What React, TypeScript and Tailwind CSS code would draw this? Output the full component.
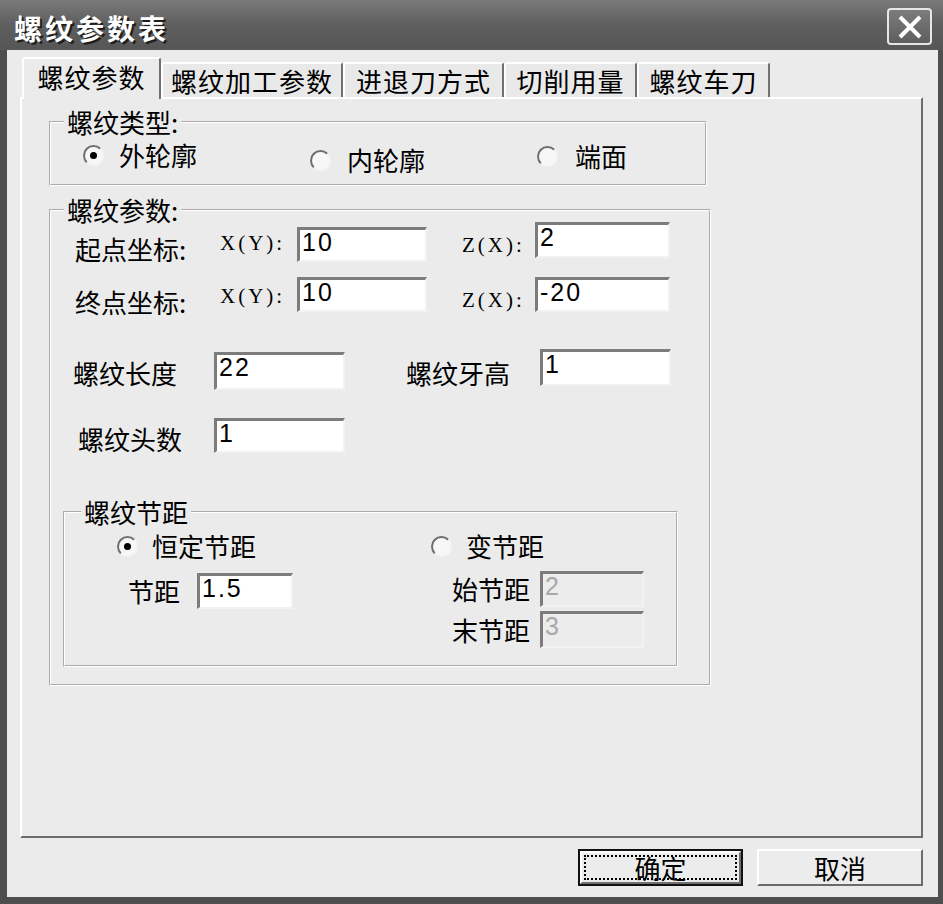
import React from 'react';

const CJK = "font-['Noto_Sans_CJK_SC','Noto_Sans_CJK_JP',sans-serif]";

function Radio({ checked }: { checked?: boolean }) {
  return (
    <span className="flex h-[21px] w-[21px] shrink-0 items-center justify-center rounded-full border-2 border-t-[#6f6f6f] border-l-[#6f6f6f] border-r-[#f4f4f4] border-b-[#f4f4f4] bg-[#f7f7f7]">
      {checked && <span className="h-[7px] w-[7px] rounded-full bg-black" />}
    </span>
  );
}

function Field({ value, className, disabled }: { value: string; className: string; disabled?: boolean }) {
  return (
    <div
      className={`shrink-0 border-t-[3px] border-l-[3px] border-r-2 border-b-2 border-t-[#7c7c7c] border-l-[#7c7c7c] border-r-[#f2f2f2] border-b-[#f2f2f2] pl-[2px] font-['Liberation_Sans',sans-serif] text-[25px] leading-[24px] tracking-[2px] ${
        disabled ? 'bg-[#ececec] text-[#a8a8a8]' : 'bg-white text-black'
      } ${className}`}
    >
      {value}
    </div>
  );
}

function Axis({ text, className }: { text: string; className: string }) {
  return (
    <span className={`shrink-0 font-['Liberation_Serif',serif] text-[21px] leading-[24px] tracking-[3px] ${className}`}>
      {text}
    </span>
  );
}

function Legend({ text, className }: { text: string; className: string }) {
  return <legend className={`px-[3px] text-[26px] leading-[24px] ${className}`}>{text}</legend>;
}

const TABS = [
  { label: '螺纹加工参数', w: 'w-[182px]' },
  { label: '进退刀方式', w: 'w-[161px]' },
  { label: '切削用量', w: 'w-[133px]' },
  { label: '螺纹车刀', w: 'w-[133px]' },
];

export default function App() {
  return (
    <div className={`flex h-[904px] w-[943px] flex-col overflow-hidden bg-[#4e4e4e] text-black ${CJK}`}>
      {/* title bar */}
      <div className="flex h-[50px] shrink-0 items-start justify-between bg-linear-to-b from-[#7a7a7a] via-[#5e5e5e] to-[#565656] pl-[14px] pr-[11px]">
        <span className="mt-[8px] text-[28px] leading-[40px] font-bold tracking-[3px] text-white [text-shadow:2px_2px_0_#1e1e1e]">
          螺纹参数表
        </span>
        <div className="mt-[8px] flex h-[37px] w-[45px] items-center justify-center rounded-[4px] border-2 border-[#e6e6e6] bg-linear-to-b from-[#7c7c7c] to-[#5e5e5e]">
          <svg width="26" height="24" viewBox="0 0 26 24">
            <path d="M3 2 L23 22 M23 2 L3 22" stroke="white" strokeWidth="4" />
          </svg>
        </div>
      </div>

      {/* body */}
      <div className="mb-[7px] ml-[7px] mr-[5px] flex flex-1 flex-col bg-[#ebebeb] pt-[7px]">
        {/* tabs */}
        <div className="ml-[15px] flex h-[40px] items-end">
          <div className="relative z-10 -mb-[2px] flex h-[42px] w-[139px] items-center justify-center rounded-t-[3px] border-l-2 border-t-2 border-r-2 border-l-white border-t-white border-r-[#707070] bg-[#ebebeb] pb-[4px] text-[26px] leading-[30px] tracking-[1px]">
            螺纹参数
          </div>
          {TABS.map((t) => (
            <div
              key={t.label}
              className={`flex h-[35px] ${t.w} items-center justify-center rounded-t-[3px] border-l-2 border-t-2 border-r-2 border-l-white border-t-white border-r-[#707070] bg-[#e9e9e9] text-[26px] leading-[30px] tracking-[1px]`}
            >
              {t.label}
            </div>
          ))}
        </div>

        {/* tab panel */}
        <div className="ml-[13px] h-[741px] w-[903px] border-2 border-t-white border-l-white border-r-[#6c6c6c] border-b-[#6c6c6c] pl-[27px] pt-[11px]">
          {/* 螺纹类型 */}
          <fieldset className="h-[76px] w-[658px] border-2 border-white [border-style:groove]">
            <Legend text="螺纹类型:" className="ml-[13px]" />
            <div className="flex items-start">
              <div className="ml-[32px] mt-[6px] flex h-[30px] w-[227px] items-center gap-[15px]">
                <Radio checked />
                <span className="text-[26px] leading-[30px]">外轮廓</span>
              </div>
              <div className="mt-[11px] flex h-[30px] w-[227px] items-center gap-[16px]">
                <Radio />
                <span className="text-[26px] leading-[30px]">内轮廓</span>
              </div>
              <div className="mt-[7px] flex h-[30px] items-center gap-[17px]">
                <Radio />
                <span className="text-[26px] leading-[30px]">端面</span>
              </div>
            </div>
          </fieldset>

          {/* 螺纹参数 */}
          <fieldset className="mt-[12px] h-[488px] w-[662px] border-2 border-white [border-style:groove]">
            <Legend text="螺纹参数:" className="ml-[13px]" />

            <div className="flex h-[40px] items-start">
              <span className="ml-[24px] mt-[12px] w-[145px] shrink-0 text-[26px] leading-[30px]">起点坐标:</span>
              <Axis text="X(Y):" className="mt-[9px] w-[77px]" />
              <Field value="10" className="mt-[5px] h-[35px] w-[130px]" />
              <Axis text="Z(X):" className="ml-[35px] mt-[11px] w-[73px]" />
              <Field value="2" className="h-[36px] w-[135px]" />
            </div>

            <div className="mt-[15px] flex h-[35px] items-start">
              <span className="ml-[24px] mt-[10px] w-[145px] shrink-0 text-[26px] leading-[30px]">终点坐标:</span>
              <Axis text="X(Y):" className="mt-[7px] w-[77px]" />
              <Field value="10" className="h-[35px] w-[130px]" />
              <Axis text="Z(X):" className="ml-[35px] mt-[11px] w-[73px]" />
              <Field value="-20" className="h-[35px] w-[135px]" />
            </div>

            <div className="mt-[37px] flex h-[41px] items-start">
              <span className="ml-[22px] mt-[9px] w-[141px] shrink-0 text-[26px] leading-[30px]">螺纹长度</span>
              <Field value="22" className="mt-[3px] h-[38px] w-[131px]" />
              <span className="ml-[61px] mt-[9px] w-[134px] shrink-0 text-[26px] leading-[30px]">螺纹牙高</span>
              <Field value="1" className="h-[37px] w-[131px]" />
            </div>

            <div className="mt-[28px] flex h-[35px] items-start">
              <span className="ml-[27px] mt-[6px] w-[136px] shrink-0 text-[26px] leading-[30px]">螺纹头数</span>
              <Field value="1" className="h-[35px] w-[131px]" />
            </div>

            {/* 螺纹节距 */}
            <fieldset className="ml-[12px] mt-[47px] h-[167px] w-[615px] border-2 border-white [border-style:groove]">
              <Legend text="螺纹节距" className="ml-[16px]" />
              <div className="mt-[7px] flex h-[30px] items-center">
                <div className="ml-[52px] flex w-[314px] items-center gap-[14px]">
                  <Radio checked />
                  <span className="text-[26px] leading-[30px]">恒定节距</span>
                </div>
                <div className="flex items-center gap-[14px]">
                  <Radio />
                  <span className="text-[26px] leading-[30px]">变节距</span>
                </div>
              </div>
              <div className="mt-[10px] flex items-start">
                <div className="mt-[2px] flex h-[36px] w-[387px] items-center">
                  <span className="ml-[63px] w-[69px] shrink-0 text-[26px] leading-[30px]">节距</span>
                  <Field value="1.5" className="h-[36px] w-[96px]" />
                </div>
                <div className="flex flex-col gap-[4px]">
                  <div className="flex h-[36px] items-center">
                    <span className="w-[88px] shrink-0 text-[26px] leading-[30px]">始节距</span>
                    <Field value="2" disabled className="h-[36px] w-[104px]" />
                  </div>
                  <div className="flex h-[37px] items-center">
                    <span className="w-[88px] shrink-0 text-[26px] leading-[30px]">末节距</span>
                    <Field value="3" disabled className="h-[37px] w-[104px]" />
                  </div>
                </div>
              </div>
            </fieldset>
          </fieldset>
        </div>

        {/* buttons */}
        <div className="ml-[13px] mt-[11px] flex w-[903px] justify-end gap-[14px]">
          <div className="flex h-[37px] w-[165px] border-2 border-[#111]">
            <div className="flex flex-1 border-2 border-t-white border-l-white border-r-[#707070] border-b-[#707070] bg-[#ececec] p-[2px]">
              <div className="flex flex-1 items-center justify-center border-2 border-dotted border-black text-[26px] leading-[26px]">
                确定
              </div>
            </div>
          </div>
          <div className="flex h-[37px] w-[166px] items-center justify-center border-2 border-t-white border-l-white border-r-[#6a6a6a] border-b-[#6a6a6a] bg-[#ececec] text-[26px] leading-[30px]">
            取消
          </div>
        </div>
      </div>
    </div>
  );
}
